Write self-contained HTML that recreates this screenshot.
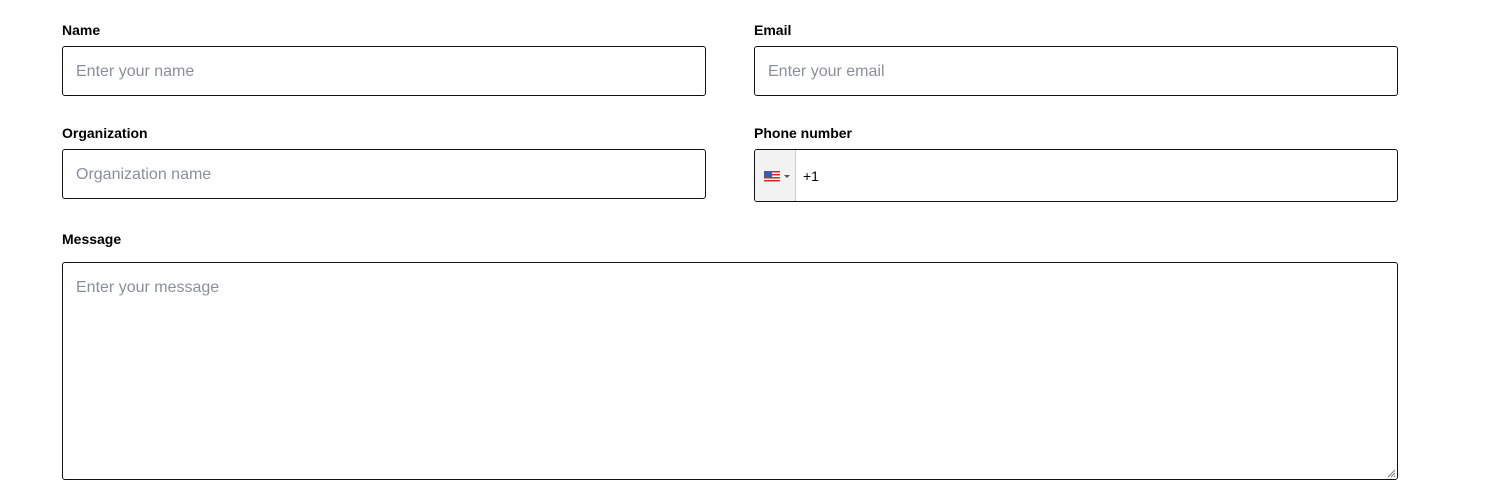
<!DOCTYPE html>
<html><head><meta charset="utf-8"><style>
html,body{margin:0;padding:0;background:#fff;width:1501px;height:501px;overflow:hidden;font-family:"Liberation Sans",Arial,sans-serif;}
.l{position:absolute;font-size:14px;font-weight:bold;color:#000;}
.i{position:absolute;box-sizing:border-box;border:1px solid #111;border-radius:3px;background:#fff;font-size:16px;color:#8a9099;padding-left:13px;}
</style></head><body>
<div class="l" style="left:62px;top:22px">Name</div>
<div class="i" style="left:62px;top:46px;width:644px;height:50px;line-height:50px">Enter your name</div>
<div class="l" style="left:754px;top:22px">Email</div>
<div class="i" style="left:754px;top:46px;width:644px;height:50px;line-height:50px">Enter your email</div>
<div class="l" style="left:62px;top:125px">Organization</div>
<div class="i" style="left:62px;top:149px;width:644px;height:50px;line-height:50px">Organization name</div>
<div class="l" style="left:754px;top:125px">Phone number</div>
<div class="i" style="left:754px;top:149px;width:644px;height:53px;padding:0;overflow:hidden">
  <div style="position:absolute;left:0;top:0;width:40px;height:51px;background:#f2f2f2;border-right:1px solid #ccc"></div>
  <svg style="position:absolute;left:9px;top:21px" width="16" height="11" viewBox="0 0 16 11">
    <rect width="16" height="11" fill="#fff"/>
    <rect y="0" width="16" height="1.5" fill="#d22"/><rect y="3" width="16" height="1.5" fill="#d22"/><rect y="6" width="16" height="1.5" fill="#d22"/><rect y="9" width="16" height="1.5" fill="#d22"/>
    <rect width="8" height="6" fill="#3a5bb0"/>
  </svg>
  <svg style="position:absolute;left:29px;top:25px" width="6" height="4"><path d="M0 0H6L3 3Z" fill="#555"/></svg>
  <div style="position:absolute;left:48px;top:1px;line-height:51px;font-size:14px;color:#000">+1</div>
</div>
<div class="l" style="left:62px;top:231px">Message</div>
<div class="i" style="left:62px;top:262px;width:1336px;height:218px;padding-top:16px;line-height:18px">Enter your message
  <svg style="position:absolute;right:1px;bottom:1px" width="9" height="9"><path d="M8 1L1 8M8 4L4 8M8 7L7 8" stroke="#777" stroke-width="1"/></svg>
</div>
</body></html>
